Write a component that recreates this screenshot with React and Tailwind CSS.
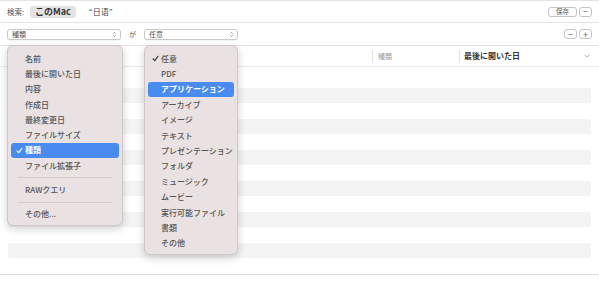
import React from "react";

const F = { fontFamily: '"Noto Sans CJK JP", "Noto Sans", sans-serif' };

function Check({ white }) {
  return (
    <svg width="7" height="7" viewBox="0 0 10 10" className="shrink-0">
      <path d="M1.5 5.5 L4 8 L8.5 1.8" fill="none" stroke={white ? "#fff" : "#333"} strokeWidth="1.7" strokeLinecap="round" strokeLinejoin="round" />
    </svg>
  );
}

function UpDown() {
  return (
    <svg width="5" height="7" viewBox="0 0 6 10">
      <path d="M1 4 L3 2 L5 4 M1 6 L3 8 L5 6" fill="none" stroke="#777" strokeWidth="1" />
    </svg>
  );
}

function Select({ label, w }) {
  return (
    <div className={`${w} h-[11px] flex items-center justify-between pl-[4px] pr-[3px] bg-white border border-[#c9c9c9] rounded-[3px] shadow-[0_0.5px_0.5px_rgba(0,0,0,0.08)]`}>
      <span className="text-[7px] text-[#555] leading-none">{label}</span>
      <UpDown />
    </div>
  );
}

function SmallBtn({ children }) {
  return (
    <div className="w-[13px] h-[10px] flex items-center justify-center bg-white border border-[#c4c4c4] rounded-[3px] text-[9px] leading-none text-[#666]">
      {children}
    </div>
  );
}

const leftItems1 = ["名前", "最後に開いた日", "内容", "作成日", "最終変更日", "ファイルサイズ", "種類", "ファイル拡張子"];
const rightItems = ["任意", "PDF", "アプリケーション", "アーカイブ", "イメージ", "テキスト", "プレゼンテーション", "フォルダ", "ミュージック", "ムービー", "実行可能ファイル", "書類", "その他"];

export default function App() {
  const rows = Array.from({ length: 13 });
  return (
    <div style={F} className="relative w-[599px] h-[290px] bg-white overflow-hidden border-t border-[#e4e4e4]">
      {/* top bar */}
      <div className="h-[22px] flex items-center pl-[7px] pr-[7px] border-b border-[#e2e2e2]">
        <span className="text-[7.5px] text-[#555]">検索:</span>
        <div className="ml-[6px] h-[12px] px-[5px] flex items-center bg-[#e3e3e3] rounded-[3px]">
          <span className="text-[9px] font-bold text-[#333] leading-none">このMac</span>
        </div>
        <span className="ml-[13px] text-[8px] text-[#444]">“日语”</span>
        <div className="ml-auto flex items-center gap-[2px]">
          <div className="w-[29px] h-[10px] flex items-center justify-center bg-white border border-[#c4c4c4] rounded-[3px] text-[6.5px] leading-none text-[#555]">保存</div>
          <SmallBtn>−</SmallBtn>
        </div>
      </div>
      {/* criteria row */}
      <div className="h-[23px] flex items-center pl-[7px] pr-[7px] border-b border-[#e2e2e2]">
        <Select label="種類" w="w-[114px]" />
        <span className="ml-[8px] text-[7px] text-[#666]">が</span>
        <div className="ml-[8px]">
          <Select label="任意" w="w-[94px]" />
        </div>
        <div className="ml-auto flex items-center gap-[2px]">
          <SmallBtn>−</SmallBtn>
          <SmallBtn>+</SmallBtn>
        </div>
      </div>
      {/* header */}
      <div className="h-[21px] flex items-center border-b border-[#ececec]">
        <div className="w-[373px] h-[13px] border-r border-[#e3e3e3]"></div>
        <div className="w-[87px] h-[13px] flex items-center pl-[5px] border-r border-[#e3e3e3]">
          <span className="text-[7px] text-[#999] leading-none">種類</span>
        </div>
        <div className="flex-1 flex items-center pl-[4px] pr-[9px]">
          <span className="text-[8px] font-bold text-[#333] leading-none">最後に開いた日</span>
          <svg className="ml-auto" width="6" height="4" viewBox="0 0 8 5">
            <path d="M1 1 L4 4 L7 1" fill="none" stroke="#999" strokeWidth="1" />
          </svg>
        </div>
      </div>
      {/* body */}
      <div className="pt-[5px] px-[8px]">
        {rows.map((_, i) => (
          <div key={i} className={`h-[15.5px] rounded-[2px] ${i % 2 === 1 ? "bg-[#f4f4f4]" : ""}`}></div>
        ))}
      </div>
      <div className="border-t border-[#e0e0e0]"></div>

      {/* left menu */}
      <div className="absolute left-[7px] top-[44px] w-[116px] bg-[#e9e1e2] border border-[#cfc6c7] rounded-[6px] shadow-[0_3px_8px_rgba(0,0,0,0.18)] pt-[5px] pb-[3px]">
        {leftItems1.map((t) => (
          <div key={t} className={`h-[15.3px] flex items-center mx-[3px] rounded-[3px] ${t === "種類" ? "bg-[#4a8bf0]" : ""}`}>
            <div className="w-[14px] flex justify-center pl-[2px]">{t === "種類" ? <Check white /> : null}</div>
            <span className={`text-[8px] leading-none ${t === "種類" ? "text-white font-bold" : "text-[#555] font-medium"}`}>{t}</span>
          </div>
        ))}
        <div className="my-[4px] mx-[10px] border-t border-[#d3cacb]"></div>
        <div className="h-[15.3px] flex items-center mx-[3px]">
          <div className="w-[14px]"></div>
          <span className="text-[8px] leading-none text-[#555] font-medium">RAWクエリ</span>
        </div>
        <div className="my-[4px] mx-[10px] border-t border-[#d3cacb]"></div>
        <div className="h-[15.3px] flex items-center mx-[3px]">
          <div className="w-[14px]"></div>
          <span className="text-[8px] leading-none text-[#555] font-medium">その他...</span>
        </div>
      </div>

      {/* right menu */}
      <div className="absolute left-[144px] top-[44px] w-[94px] h-[210px] bg-[#e9e1e2] border border-[#cfc6c7] rounded-[6px] shadow-[0_3px_8px_rgba(0,0,0,0.18)] pt-[5px]">
        {rightItems.map((t, i) => (
          <div key={t} className={`h-[15.4px] flex items-center mx-[3px] rounded-[3px] ${i === 2 ? "bg-[#4a8bf0]" : ""}`}>
            <div className="w-[13px] flex justify-center pl-[1px]">{i === 0 ? <Check /> : null}</div>
            <span className={`text-[8px] leading-none ${i === 2 ? "text-white font-bold" : "text-[#555] font-medium"}`}>{t}</span>
          </div>
        ))}
      </div>
    </div>
  );
}
